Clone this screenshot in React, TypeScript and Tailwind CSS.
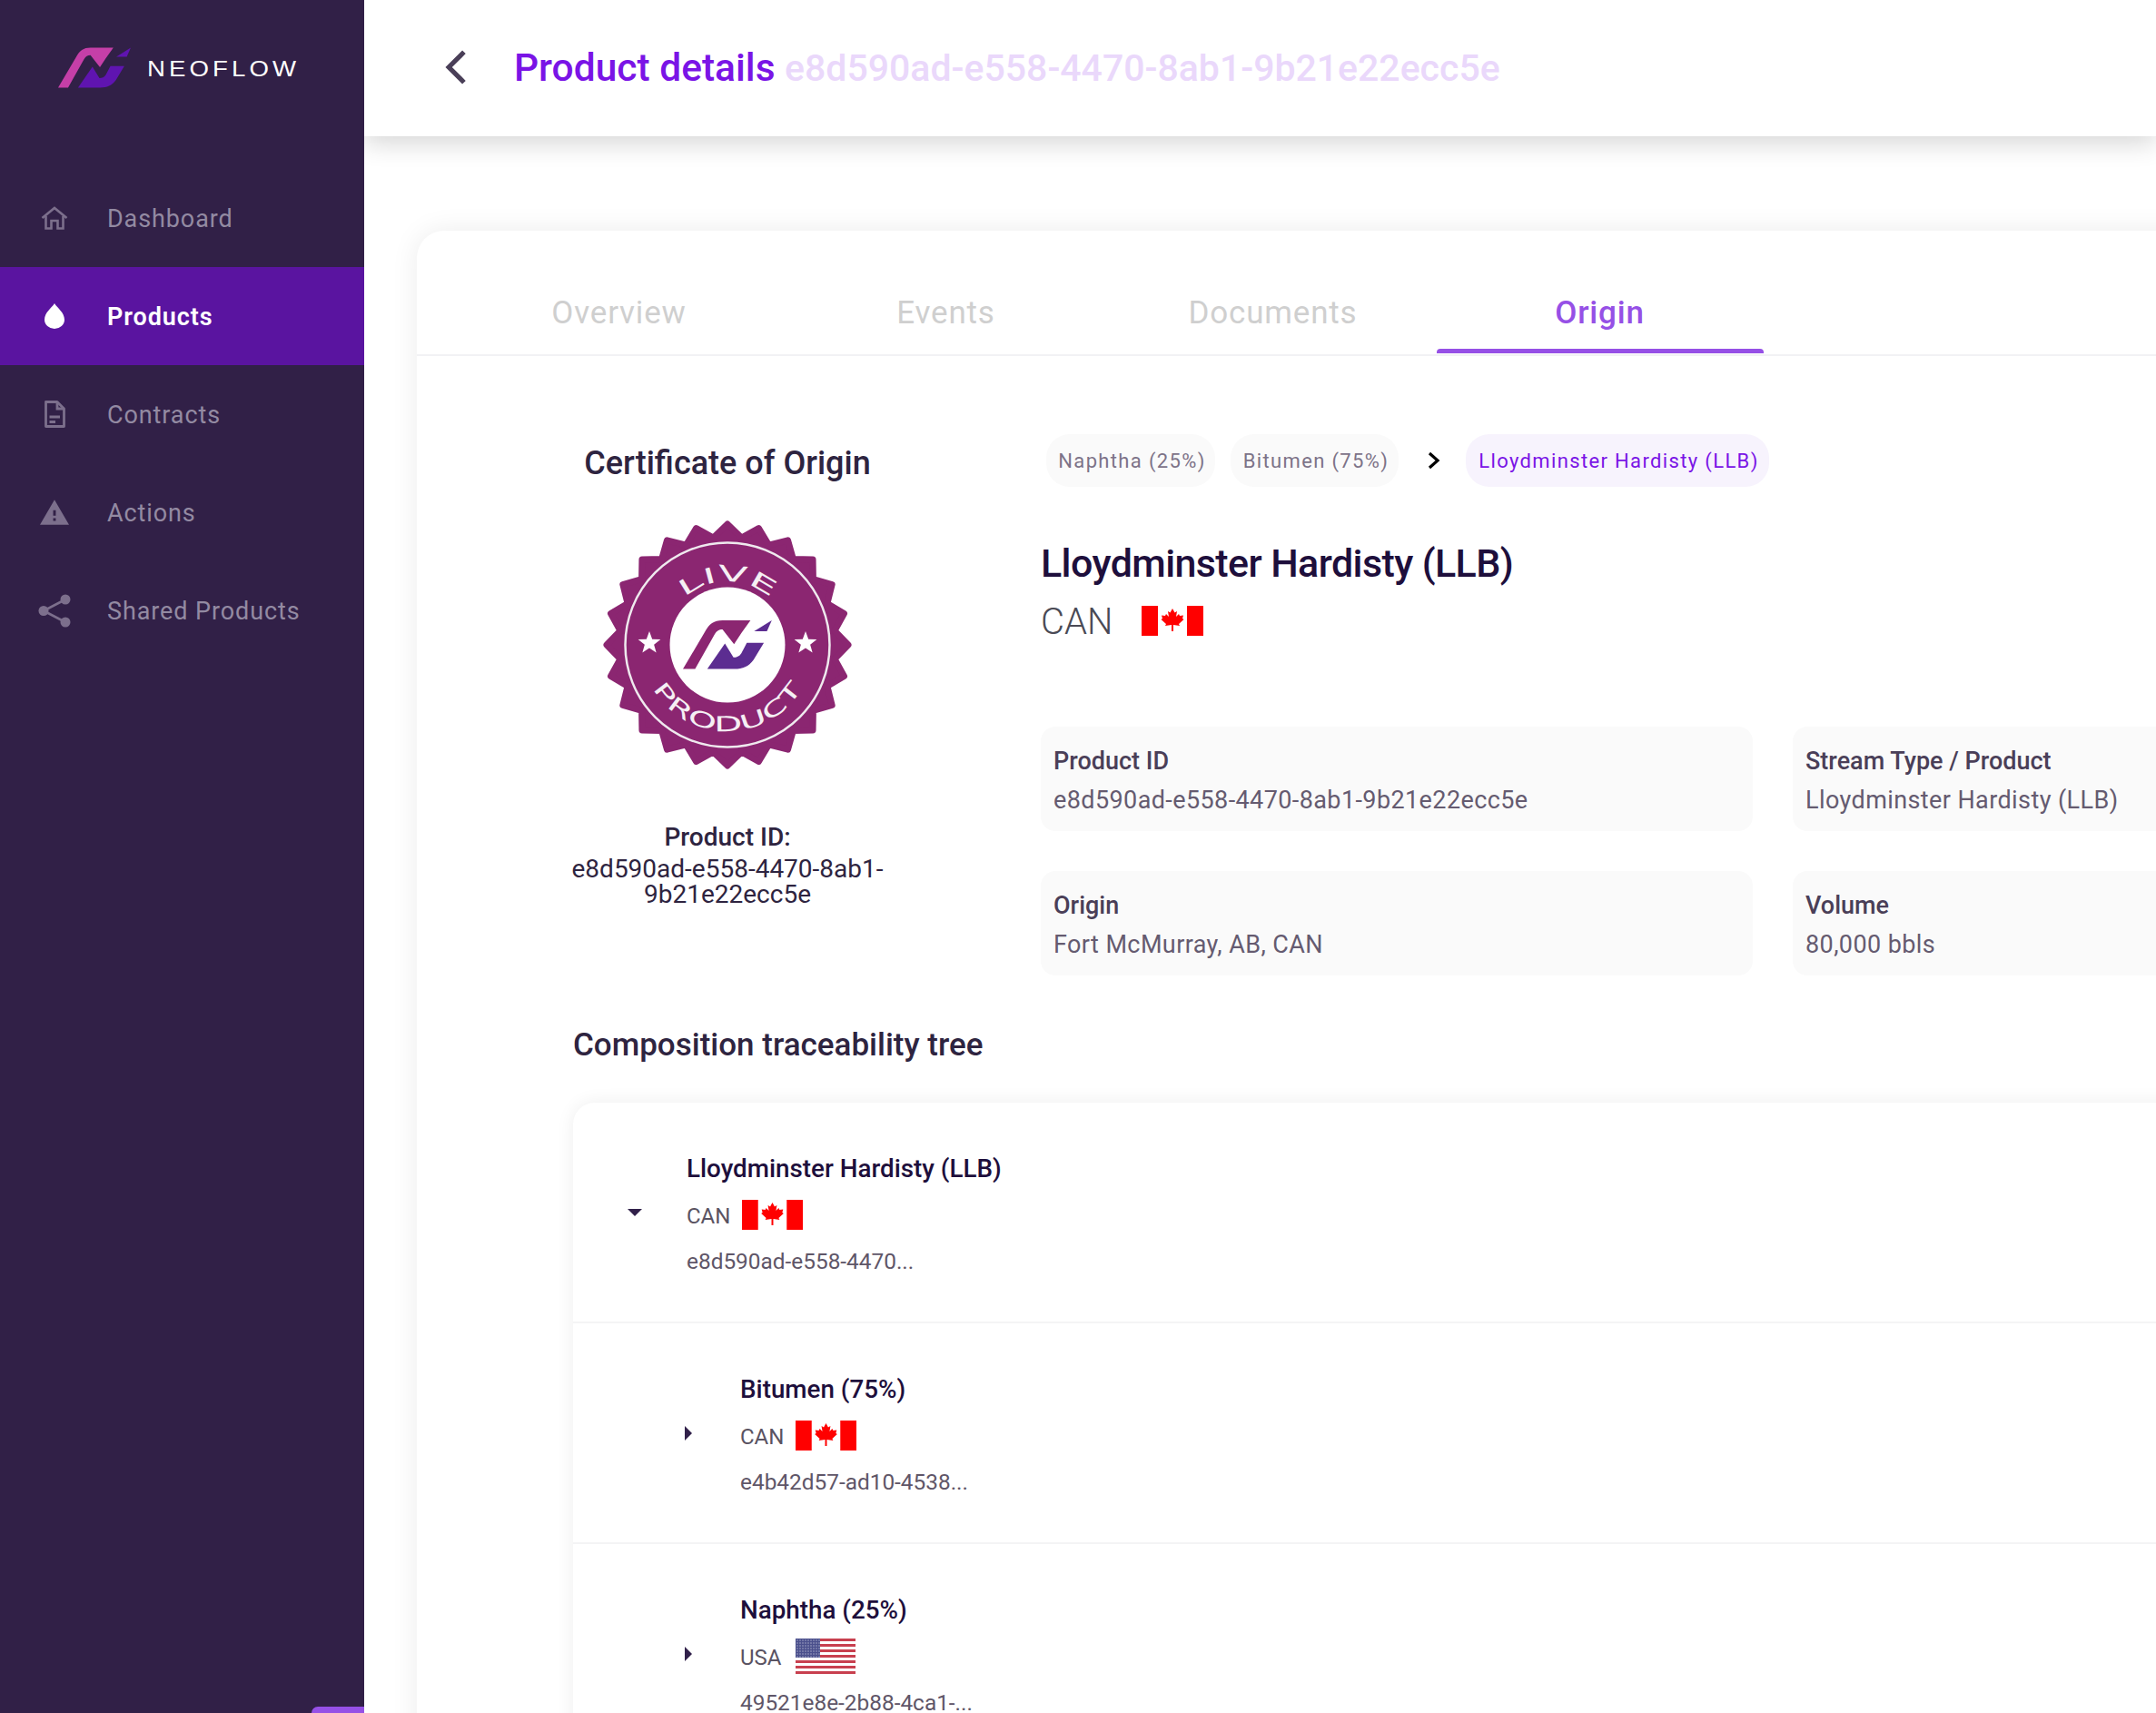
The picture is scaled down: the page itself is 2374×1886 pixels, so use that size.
import React from "react";

const font = "font-['Roboto',sans-serif]";

function Logo({ className, a, b }: { className: string; a: string; b: string }) {
  return (
    <svg viewBox="0 0 292 160" className={className}>
      <path d="M0 160 L72 38 C86 12 102 0 130 0 L222 0 L192 42 L168 78 L130 30 C118 30 112 34 104 46 L40 160 Z" fill={a} />
      <path d="M80 160 L138 76 L166 122 C176 122 186 118 192 108 L210 74 L266 74 L232 130 C216 152 196 160 170 160 Z" fill={b} />
      <path d="M234 36 L292 0 L276 36 Z" fill={b} />
    </svg>
  );
}

function CanadaFlag({ className }: { className: string }) {
  return (
    <svg viewBox="0 0 68 33" className={className} preserveAspectRatio="none">
      <rect width="68" height="33" fill="#fff" />
      <rect width="18" height="33" fill="#ff0000" />
      <rect x="50" width="18" height="33" fill="#ff0000" />
      <polygon
        transform="translate(34 16)"
        fill="#ff0000"
        points="0,-13 2.5,-8.5 5,-10 4,-4 7,-7 8,-5 12,-5.5 11,-2 12.5,-1 7,4 8,6 1,5 1,12 -1,12 -1,5 -8,6 -7,4 -12.5,-1 -11,-2 -12,-5.5 -8,-5 -7,-7 -4,-4 -5,-10 -2.5,-8.5"
      />
    </svg>
  );
}

function UsaFlag({ className }: { className: string }) {
  const stripes = Array.from({ length: 13 }, (_, i) => i);
  const dots: number[][] = [];
  for (let r = 0; r < 7; r++) for (let c = 0; c < 9; c++) dots.push([2 + c * 3, 2 + r * 3]);
  return (
    <svg viewBox="0 0 66 39" className={className} preserveAspectRatio="none">
      <rect width="66" height="39" fill="#fff" />
      {stripes.map((i) => (i % 2 === 0 ? <rect key={i} y={i * 3} width="66" height="3" fill="#c8404f" /> : null))}
      <rect width="27" height="21" fill="#4a4f8c" />
      {dots.map(([x, y], i) => (
        <circle key={i} cx={x} cy={y} r="0.7" fill="#b9bcd6" />
      ))}
    </svg>
  );
}

function Badge() {
  const pts: string[] = [];
  for (let i = 0; i < 48; i++) {
    const r = i % 2 === 0 ? 133 : 119;
    const an = (i * 7.5 - 90) * (Math.PI / 180);
    pts.push(`${170 + r * Math.cos(an)},${170 + r * Math.sin(an)}`);
  }
  const star = (cx: number, cy: number) => {
    const p: string[] = [];
    for (let i = 0; i < 10; i++) {
      const r = i % 2 === 0 ? 13 : 5.4;
      const an = (i * 36 - 90) * (Math.PI / 180);
      p.push(`${cx + r * Math.cos(an)},${cy + r * Math.sin(an)}`);
    }
    return p.join(" ");
  };
  return (
    <svg viewBox="0 0 340 340" className="w-[340px] h-[340px]">
      <defs>
        <path id="liveArc" d="M 100 170 A 70 70 0 0 1 240 170" />
        <path id="productArc" d="M 75 170 A 95 95 0 0 0 265 170" />
      </defs>
      <polygon points={pts.join(" ")} fill="#8b2671" stroke="#8b2671" strokeWidth="7" strokeLinejoin="round" />
      <circle cx="170" cy="170" r="112.5" fill="none" stroke="#efe9ee" strokeWidth="2.5" />
      <circle cx="170" cy="170" r="63.5" fill="#fff" />
      <polygon points={star(84, 168)} fill="#fff" />
      <polygon points={star(256, 168)} fill="#fff" />
      <text fill="#f5eff4" fontFamily="'DejaVu Sans',sans-serif" fontSize="24">
        <textPath href="#liveArc" startOffset="58" textLength="104" lengthAdjust="spacingAndGlyphs">LIVE</textPath>
      </text>
      <text fill="#f5eff4" fontFamily="'DejaVu Sans',sans-serif" fontSize="23">
        <textPath href="#productArc" startOffset="50" textLength="198" lengthAdjust="spacingAndGlyphs">PRODUCT</textPath>
      </text>
      <g transform="translate(121 143) scale(0.335)">
        <path d="M0 160 L72 38 C86 12 102 0 130 0 L222 0 L192 42 L168 78 L130 30 C118 30 112 34 104 46 L40 160 Z" fill="#8b2671" />
        <path d="M80 160 L138 76 L166 122 C176 122 186 118 192 108 L210 74 L266 74 L232 130 C216 152 196 160 170 160 Z" fill="#5c2d91" />
        <path d="M234 36 L292 0 L276 36 Z" fill="#5c2d91" />
      </g>
    </svg>
  );
}

const grey = "#7c6f8c";
const navItems = [
  {
    label: "Dashboard",
    icon: (
      <svg viewBox="0 0 30 26" className="w-[30px] h-[26px]" fill="none" stroke={grey} strokeWidth="2.6">
        <path d="M1.5 13 L15 2 L28.5 13" />
        <path d="M5.5 11 V24.5 H11.5 V16 H18.5 V24.5 H24.5 V11" />
      </svg>
    ),
  },
  {
    label: "Products",
    icon: (
      <svg viewBox="0 0 22 28" className="w-[22px] h-[28px]">
        <path d="M11 0 C14 5 22 10 22 18 A11 10 0 0 1 0 18 C0 10 8 5 11 0 Z" fill="#fff" />
      </svg>
    ),
  },
  {
    label: "Contracts",
    icon: (
      <svg viewBox="0 0 24 30" className="w-[24px] h-[30px]" fill="none" stroke={grey} strokeWidth="2.8">
        <path d="M2.5 1.5 H15 L22.5 9 V28.5 H2.5 Z" strokeLinejoin="round" />
        <path d="M15 1.5 V9 H22.5" />
        <path d="M6.5 18 H18 M6.5 23.5 H13" />
      </svg>
    ),
  },
  {
    label: "Actions",
    icon: (
      <svg viewBox="1 2 22 19" className="w-[32px] h-[28px]">
        <path d="M1 21h22L12 2 1 21zm12-3h-2v-2h2v2zm0-4h-2v-4h2v4z" fill={grey} />
      </svg>
    ),
  },
  {
    label: "Shared Products",
    icon: (
      <svg viewBox="0 0 36 37" className="w-[36px] h-[37px]" fill={grey} stroke={grey}>
        <path d="M30 6 L6 18.5 L30 31" fill="none" strokeWidth="2.6" />
        <circle cx="6" cy="18.5" r="5.5" stroke="none" />
        <circle cx="30" cy="6" r="5.5" stroke="none" />
        <circle cx="30" cy="31" r="5.5" stroke="none" />
      </svg>
    ),
  },
];

function Sidebar() {
  return (
    <aside className="relative w-[401px] shrink-0 h-full bg-[#312047]">
      <div className="h-[186px] pt-[52px] pl-[64px] flex items-start">
        <Logo className="w-[80px] h-[45px]" a="#c53fa8" b="#5f14b0" />
        <span className="ml-[18px] mt-[11px] inline-block origin-left scale-x-120 font-['Liberation_Sans',sans-serif] text-[23px] leading-[26px] tracking-[3.4px] text-white">
          NEOFLOW
        </span>
      </div>
      {navItems.map((n) => {
        const active = n.label === "Products";
        return (
          <div key={n.label} className={`h-[108px] flex items-center ${active ? "bg-[#5a14a0]" : ""}`}>
            <div className="w-[118px] pl-[2px] flex justify-center">{n.icon}</div>
            <span
              className={`pt-[2px] text-[27px] tracking-[0.9px] ${active ? "font-semibold text-white" : "text-[#938aa2]"}`}
            >
              {n.label}
            </span>
          </div>
        );
      })}
      <div className="absolute right-0 bottom-0 w-[58px] h-[7px] rounded-tl-lg bg-[#9650e6]" />
    </aside>
  );
}

function Tabs() {
  const tabs = ["Overview", "Events", "Documents", "Origin"];
  return (
    <div className="flex pl-[42px] h-[138px] border-b-2 border-[#f2f2f4]">
      {tabs.map((t) => {
        const active = t === "Origin";
        return (
          <div
            key={t}
            className={`relative w-[360px] flex items-center justify-center pl-[1px] pt-[55px] pb-[8px] text-[35px] tracking-[0.8px] ${
              active ? "text-[#9650e6] font-medium" : "text-[#cfcfcf]"
            }`}
          >
            {t}
            {active && <div className="absolute left-[1px] right-[-1px] bottom-[1px] h-[5px] rounded-t-sm bg-[#9650e6]" />}
          </div>
        );
      })}
    </div>
  );
}

function Info({ label, value }: { label: string; value: string }) {
  return (
    <div className="w-[784px] h-[115px] rounded-2xl bg-[#fafafa] px-[14px] pt-[16px]">
      <div className="text-[27px] leading-[44px] font-medium text-[#4a3f58]">{label}</div>
      <div className="text-[27px] leading-[42px] text-[#655b70] tracking-[0.4px]">{value}</div>
    </div>
  );
}

function TreeRow({
  depth,
  title,
  code,
  flag,
  id,
  open,
}: {
  depth: boolean;
  title: string;
  code: string;
  flag: React.ReactNode;
  id: string;
  open?: boolean;
}) {
  return (
    <div className={`h-[243px] flex border-b-2 border-[#f4f4f5] ${depth ? "pl-[97px]" : "pl-[38px]"}`}>
      <div className="w-[60px] mr-[27px] flex items-center justify-center">
        {open ? (
          <svg viewBox="0 0 16 8" className="w-[16px] h-[8px]"><path d="M0 0 H16 L8 8 Z" fill="#31204a" /></svg>
        ) : (
          <svg viewBox="0 0 8 16" className="w-[8px] h-[16px]"><path d="M0 0 V16 L8 8 Z" fill="#31204a" /></svg>
        )}
      </div>
      <div className="pt-[48px]">
        <div className="h-[50px] flex items-center text-[27.8px] font-medium text-[#1e0f3c]">{title}</div>
        <div className="h-[54px] flex items-center gap-[14px] text-[24px] text-[#5a5362]">
          <span className="w-[47px]">{code}</span>
          <span className="mb-[4px] flex">{flag}</span>
        </div>
        <div className="h-[46px] flex items-center text-[24.4px] text-[#5f5668]">{id}</div>
      </div>
    </div>
  );
}

export default function App() {
  return (
    <div className={`flex w-[2374px] h-[1886px] overflow-hidden bg-white ${font}`}>
      <Sidebar />
      <main className="flex-1 min-w-0 overflow-hidden">
        <header className="relative h-[150px] bg-white flex items-center pl-[89px] shadow-[0_8px_26px_rgba(0,0,0,0.16)]">
          <svg viewBox="0 0 22 36" className="w-[23px] h-[38px] mb-[3px]" fill="none" stroke="#4a3f58" strokeWidth="5">
            <path d="M20 2 L4 18 L20 34" />
          </svg>
          <h1 className="ml-[53px] text-[42.5px] font-medium whitespace-nowrap text-[#7a14e6]">
            Product details <span className="text-[41px] text-[#ead8fb]">e8d590ad-e558-4470-8ab1-9b21e22ecc5e</span>
          </h1>
        </header>
        <div className="pt-[104px] pl-[58px]">
          <section className="w-[2100px] rounded-tl-[30px] bg-white shadow-[0_0_30px_rgba(0,0,0,0.08)]">
            <Tabs />
            <div className="pl-[172px] pt-[86px]">
              <div className="flex">
                <div className="w-[340px] mr-[175px] flex flex-col items-center text-center text-[#1e0f3c]">
                  <h2 className="mt-[10px] text-[36px] leading-[44px] font-medium text-[#2e2440]">Certificate of Origin</h2>
                  <div className="mt-[8px]"><Badge /></div>
                  <div className="mt-[22px] text-[28px] leading-[40px] font-medium text-[#2e2440]">Product ID:</div>
                  <div className="mt-[1px] text-[28px] leading-[28px] text-[#2e2440] w-[360px] shrink-0">
                    e8d590ad-e558-4470-8ab1-
                    <br />
                    9b21e22ecc5e
                  </div>
                </div>
                <div>
                  <div className="flex items-center h-[58px] ml-[6px]">
                    <span className="h-[58px] w-[186px] flex items-center justify-center pl-[3px] rounded-[26px] bg-[#fafafa] text-[22px] tracking-[1.35px] text-[#7d7388]">Naphtha (25%)</span>
                    <span className="ml-[17px] h-[58px] w-[185px] flex items-center justify-center pl-[3px] rounded-[26px] bg-[#fafafa] text-[22px] tracking-[1.35px] text-[#7d7388]">Bitumen (75%)</span>
                    <svg viewBox="0 0 14 20" className="ml-[32px] w-[14px] h-[22px]" fill="none" stroke="#000" strokeWidth="3.2"><path d="M2 2 L11 10 L2 18" /></svg>
                    <span className="ml-[28px] h-[58px] w-[334px] flex items-center justify-center pl-[3px] rounded-[26px] bg-[#f7f3fd] text-[22px] tracking-[1.35px] text-[#7a14e6]">Lloydminster Hardisty (LLB)</span>
                  </div>
                  <div className="mt-[54px] text-[43px] tracking-[-0.6px] leading-[60px] font-medium text-[#1e0f3c]">Lloydminster Hardisty (LLB)</div>
                  <div className="mt-[10px] h-[50px] flex items-center text-[40px] font-light text-[#4a4a55]">
                    <span className="w-[111px]">CAN</span>
                    <CanadaFlag className="w-[68px] h-[33px] mb-[4px]" />
                  </div>
                  <div className="mt-[90px] grid grid-cols-[784px_784px] gap-x-[44px] gap-y-[44px]">
                    <Info label="Product ID" value="e8d590ad-e558-4470-8ab1-9b21e22ecc5e" />
                    <Info label="Stream Type / Product" value="Lloydminster Hardisty (LLB)" />
                    <Info label="Origin" value="Fort McMurray, AB, CAN" />
                    <Info label="Volume" value="80,000 bbls" />
                  </div>
                </div>
              </div>
              <h2 className="mt-[55px] text-[35px] leading-[44px] font-medium text-[#2e2440]">Composition traceability tree</h2>
              <div className="mt-[41px] rounded-tl-[24px] bg-white shadow-[0_0_20px_rgba(0,0,0,0.07)]">
                <TreeRow depth={false} open title="Lloydminster Hardisty (LLB)" code="CAN" flag={<CanadaFlag className="w-[67px] h-[33px]" />} id="e8d590ad-e558-4470..." />
                <TreeRow depth title="Bitumen (75%)" code="CAN" flag={<CanadaFlag className="w-[67px] h-[33px]" />} id="e4b42d57-ad10-4538..." />
                <TreeRow depth title="Naphtha (25%)" code="USA" flag={<UsaFlag className="w-[66px] h-[39px]" />} id="49521e8e-2b88-4ca1-..." />
              </div>
            </div>
          </section>
        </div>
      </main>
    </div>
  );
}
